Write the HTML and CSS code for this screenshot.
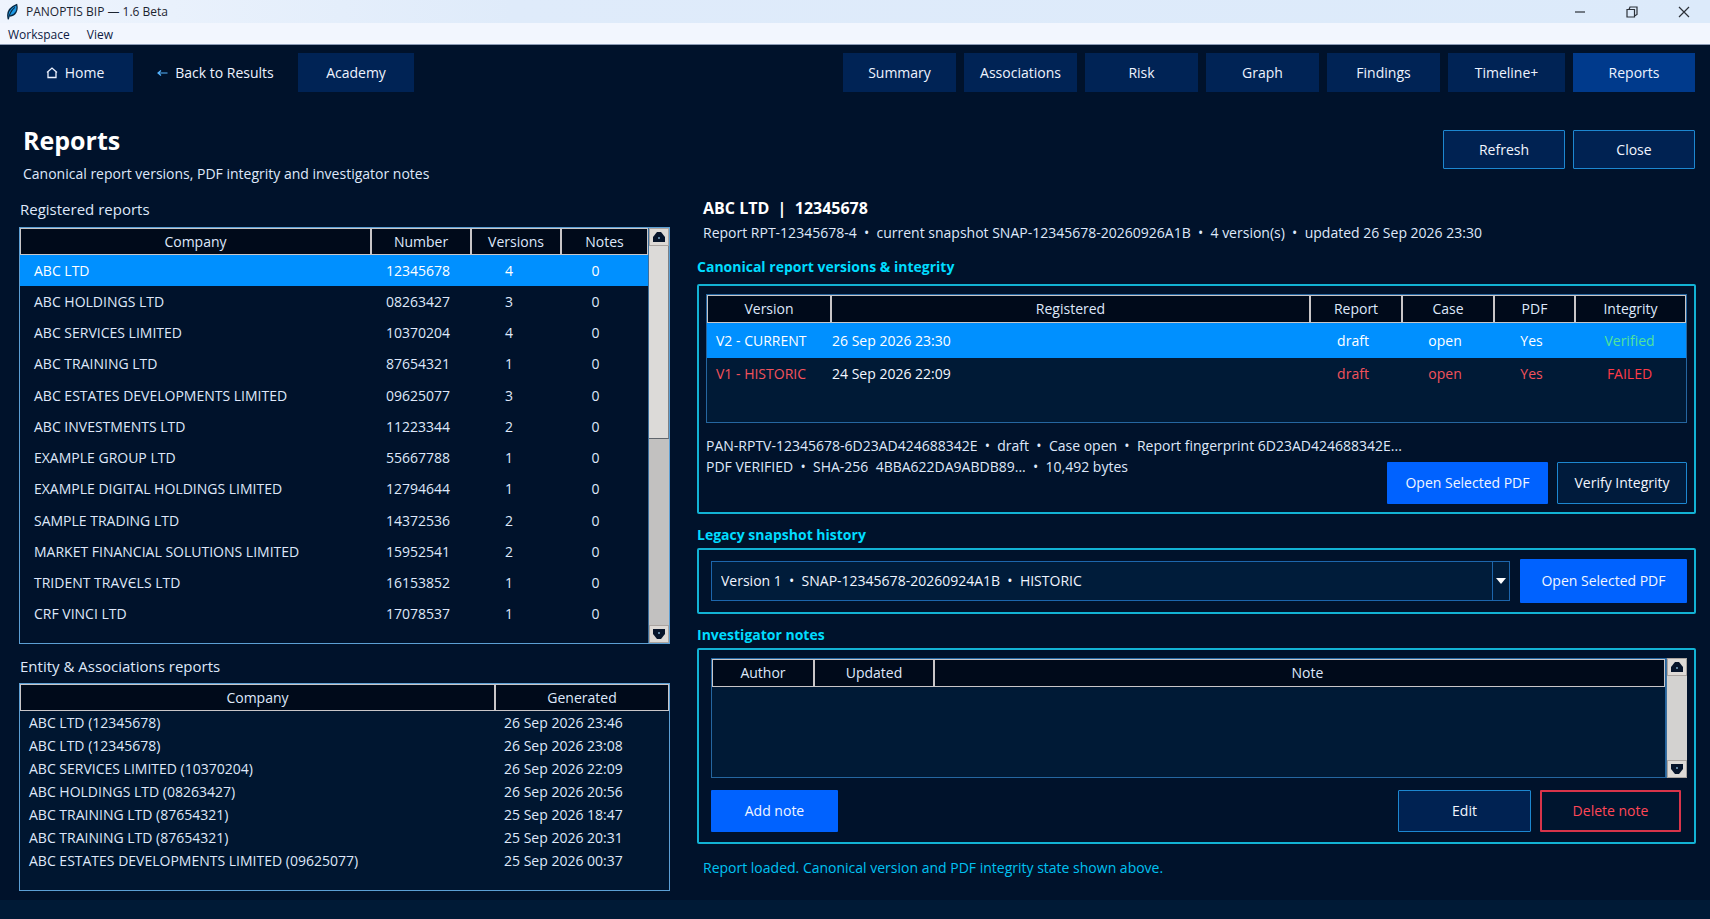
FILE: index.html
```html
<!DOCTYPE html>
<html lang="en">
<head>
<meta charset="utf-8">
<title>PANOPTIS BIP — 1.6 Beta</title>
<link rel="stylesheet" href="styles.css">
</head>
<body>
<div class="app">
  <header class="titlebar">
    <svg class="app-icon" viewBox="0 0 14 18" aria-hidden="true"><path d="M2.5 16.5C1 11 1.500 5 11.500 1C13 7 10.500 12.500 4 13.500" fill="#1f9be6" stroke="#0a2a44" stroke-width="1.400"/><path d="M2.500 17C3.500 11 6 7 9.500 4" fill="none" stroke="#0a2a44" stroke-width="1.200"/></svg>
    <span class="app-name">PANOPTIS BIP — 1.6 Beta</span>
    <div class="window-controls">
      <button type="button" aria-label="Minimize"><svg viewBox="0 0 12 12"><path d="M1 6H11"/></svg></button>
      <button type="button" aria-label="Restore"><svg viewBox="0 0 12 12"><path d="M1 3.500H8.500V11H1ZM3 3.500L4 1H11V8.500L8.500 10"/></svg></button>
      <button type="button" aria-label="Close window"><svg viewBox="0 0 12 12"><path d="M1 1L11 11M11 1L1 11"/></svg></button>
    </div>
  </header>
  <nav class="menubar" aria-label="Menu">
    <button type="button">Workspace</button>
    <button type="button">View</button>
  </nav>

  <div class="toolbar">
    <button type="button" class="tab wide"><svg class="home" viewBox="0 0 12 12" aria-hidden="true"><path d="M1 5.500L6 1L11 5.500M2 5V10.500H10V5"/></svg>Home</button>
    <button type="button" class="tab back"><svg class="arrow" viewBox="0 0 11 8" aria-hidden="true"><path d="M10.500 4H1M4 1.500L1 4L4 6.500"/></svg>Back to Results</button>
    <button type="button" class="tab wide">Academy</button>
    <nav class="tabs" aria-label="Sections">
      <button type="button" class="tab">Summary</button>
      <button type="button" class="tab">Associations</button>
      <button type="button" class="tab">Risk</button>
      <button type="button" class="tab">Graph</button>
      <button type="button" class="tab">Findings</button>
      <button type="button" class="tab tab-md">Timeline+</button>
      <button type="button" class="tab tab-lg active">Reports</button>
    </nav>
  </div>

  <div class="page-head">
    <div>
      <h1>Reports</h1>
      <p>Canonical report versions, PDF integrity and investigator notes</p>
    </div>
    <div class="head-actions">
      <button type="button" class="btn outline">Refresh</button>
      <button type="button" class="btn outline">Close</button>
    </div>
  </div>

  <main class="columns">
    <section class="left">
      <h2 class="label">Registered reports</h2>
      <div class="frame registered">
        <table class="grid reports">
          <colgroup><col class="c-company"><col class="c-number"><col class="c-versions"><col class="c-notes"></colgroup>
          <thead><tr><th>Company</th><th>Number</th><th>Versions</th><th>Notes</th></tr></thead>
          <tbody>
            <tr class="selected"><td>ABC LTD</td><td>12345678</td><td>4</td><td>0</td></tr>
            <tr><td>ABC HOLDINGS LTD</td><td>08263427</td><td>3</td><td>0</td></tr>
            <tr><td>ABC SERVICES LIMITED</td><td>10370204</td><td>4</td><td>0</td></tr>
            <tr><td>ABC TRAINING LTD</td><td>87654321</td><td>1</td><td>0</td></tr>
            <tr><td>ABC ESTATES DEVELOPMENTS LIMITED</td><td>09625077</td><td>3</td><td>0</td></tr>
            <tr><td>ABC INVESTMENTS LTD</td><td>11223344</td><td>2</td><td>0</td></tr>
            <tr><td>EXAMPLE GROUP LTD</td><td>55667788</td><td>1</td><td>0</td></tr>
            <tr><td>EXAMPLE DIGITAL HOLDINGS LIMITED</td><td>12794644</td><td>1</td><td>0</td></tr>
            <tr><td>SAMPLE TRADING LTD</td><td>14372536</td><td>2</td><td>0</td></tr>
            <tr><td>MARKET FINANCIAL SOLUTIONS LIMITED</td><td>15952541</td><td>2</td><td>0</td></tr>
            <tr><td>TRIDENT TRAVЄLS LTD</td><td>16153852</td><td>1</td><td>0</td></tr>
            <tr><td>CRF VINCI LTD</td><td>17078537</td><td>1</td><td>0</td></tr>
          </tbody>
        </table>
        <div class="scrollbar">
          <button type="button" aria-label="Scroll up"><svg viewBox="0 0 14 12"><path d="M1 11V6L5 1H9L13 6V11Z"/><circle cx="7" cy="7" r="1"/></svg></button>
          <div class="trough"><div class="thumb"></div></div>
          <button type="button" aria-label="Scroll down"><svg viewBox="0 0 14 12"><path d="M1 1V6L5 11H9L13 6V1Z"/><circle cx="7" cy="5" r="1"/></svg></button>
        </div>
      </div>

      <h2 class="label second">Entity &amp; Associations reports</h2>
      <div class="frame entity">
        <table class="grid entities">
          <colgroup><col class="c-entity"><col></colgroup>
          <thead><tr><th>Company</th><th>Generated</th></tr></thead>
          <tbody>
            <tr><td>ABC LTD (12345678)</td><td>26 Sep 2026 23:46</td></tr>
            <tr><td>ABC LTD (12345678)</td><td>26 Sep 2026 23:08</td></tr>
            <tr><td>ABC SERVICES LIMITED (10370204)</td><td>26 Sep 2026 22:09</td></tr>
            <tr><td>ABC HOLDINGS LTD (08263427)</td><td>26 Sep 2026 20:56</td></tr>
            <tr><td>ABC TRAINING LTD (87654321)</td><td>25 Sep 2026 18:47</td></tr>
            <tr><td>ABC TRAINING LTD (87654321)</td><td>25 Sep 2026 20:31</td></tr>
            <tr><td>ABC ESTATES DEVELOPMENTS LIMITED (09625077)</td><td>25 Sep 2026 00:37</td></tr>
          </tbody>
        </table>
      </div>
    </section>

    <section class="right">
      <div class="summary">
        <h2>ABC LTD  |  12345678</h2>
        <p>Report RPT-12345678-4  •  current snapshot SNAP-12345678-20260926A1B  •  4 version(s)  •  updated 26 Sep 2026 23:30</p>
      </div>

      <h3>Canonical report versions &amp; integrity</h3>
      <div class="panel canonical">
        <div class="inner versions-frame">
          <table class="grid versions">
            <colgroup><col class="v-version"><col><col class="v-report"><col class="v-case"><col class="v-pdf"><col class="v-integrity"></colgroup>
            <thead><tr><th>Version</th><th>Registered</th><th>Report</th><th>Case</th><th>PDF</th><th>Integrity</th></tr></thead>
            <tbody>
              <tr class="selected"><td>V2 - CURRENT</td><td>26 Sep 2026 23:30</td><td>draft</td><td>open</td><td>Yes</td><td class="ok">Verified</td></tr>
              <tr class="historic"><td>V1 - HISTORIC</td><td class="plain">24 Sep 2026 22:09</td><td>draft</td><td>open</td><td>Yes</td><td class="bad">FAILED</td></tr>
            </tbody>
          </table>
        </div>
        <div class="detail">
          <p>PAN-RPTV-12345678-6D23AD424688342E  •  draft  •  Case open  •  Report fingerprint 6D23AD424688342E...
PDF VERIFIED  •  SHA-256  4BBA622DA9ABDB89...  •  10,492 bytes</p>
          <div class="detail-actions">
            <button type="button" class="btn primary open">Open Selected PDF</button>
            <button type="button" class="btn outline dim">Verify Integrity</button>
          </div>
        </div>
      </div>

      <h3>Legacy snapshot history</h3>
      <div class="panel legacy">
        <div class="combo">
          <select aria-label="Legacy snapshot"><option>Version 1 &nbsp;• &nbsp;SNAP-12345678-20260924A1B &nbsp;• &nbsp;HISTORIC</option></select>
          <span class="drop"><svg viewBox="0 0 10 6" aria-hidden="true"><path d="M0 0H10L5 6Z"/></svg></span>
        </div>
        <button type="button" class="btn primary">Open Selected PDF</button>
      </div>

      <h3>Investigator notes</h3>
      <div class="panel notes">
        <div class="notes-view">
          <div class="inner notes-frame">
            <table class="grid notes-table">
              <colgroup><col class="n-author"><col class="n-updated"><col></colgroup>
              <thead><tr><th>Author</th><th>Updated</th><th>Note</th></tr></thead>
            </table>
          </div>
          <div class="scrollbar">
            <button type="button" aria-label="Scroll notes up"><svg viewBox="0 0 14 12"><path d="M1 11V6L5 1H9L13 6V11Z"/><circle cx="7" cy="7" r="1"/></svg></button>
            <div class="trough"><div class="thumb full"></div></div>
            <button type="button" aria-label="Scroll notes down"><svg viewBox="0 0 14 12"><path d="M1 1V6L5 11H9L13 6V1Z"/><circle cx="7" cy="5" r="1"/></svg></button>
          </div>
        </div>
        <div class="notes-actions">
          <button type="button" class="btn primary add">Add note</button>
          <button type="button" class="btn outline edit">Edit</button>
          <button type="button" class="btn danger">Delete note</button>
        </div>
      </div>
      <p class="status" role="status">Report loaded. Canonical version and PDF integrity state shown above.</p>
    </section>
  </main>
  <footer class="bottom"></footer>
</div>
</body>
</html>
```

FILE: styles.css
```css
* { box-sizing: border-box; }
body { margin: 0; background: #00122b; color: #dfe8fa; font: 14px/20px "Open Sans", "Noto Sans", sans-serif; }
h1, h2, h3, p { margin: 0; font-weight: 400; }
button, select { font: inherit; color: inherit; border: 0; padding: 0; margin: 0; background: none; border-radius: 0; }
svg { display: block; }
.app { min-height: 100vh; display: flex; flex-direction: column; }

.titlebar { height: 23px; display: flex; align-items: center; background: linear-gradient(90deg, #eef4fd, #dfebfa 30%, #dceafa); color: #1c2430; font-size: 12px; padding-left: 6px; }
.app-icon { width: 13px; height: 18px; margin-right: 7px; }
.window-controls { margin-left: auto; display: flex; height: 100%; }
.window-controls button { width: 52px; display: flex; align-items: center; justify-content: center; }
.window-controls svg { width: 12px; height: 12px; fill: none; stroke: #2b3038; stroke-width: 1.2; }
.menubar { height: 22px; display: flex; gap: 17px; padding: 2px 0 0 8px; background: #f2f6fe; border-bottom: 1px solid #8c9bb5; color: #0e1a44; font-size: 12px; }

.toolbar { display: flex; padding: 8px 15px 0 17px; }
.tab { width: 113px; height: 39px; background: #002355; color: #eef3ff; display: flex; align-items: center; justify-content: center; }
.tab.wide { width: 116px; }
.tab.tab-md { width: 117px; }
.tab.tab-lg { width: 122px; }
.tab.active { background: #003a8c; }
.tab.back { width: 165px; background: none; }
.home { width: 12px; height: 12px; margin-right: 7px; fill: none; stroke: #eef3ff; stroke-width: 1.3; }
.arrow { width: 11px; height: 8px; margin-right: 7px; fill: none; stroke: #55b4ff; stroke-width: 1.2; }
.tabs { margin-left: auto; display: flex; gap: 8px; }

.page-head { display: flex; justify-content: space-between; padding: 30px 15px 0 23px; height: 98px; }
.page-head h1 { font-size: 25px; line-height: 36px; font-weight: 700; color: #fff; }
.page-head p { margin-top: 6px; }
.head-actions { display: flex; gap: 8px; padding-top: 8px; }
.head-actions .btn { width: 122px; height: 39px; }

.btn { color: #f2f6ff; height: 42px; border-radius: 1px; }
.outline { background: #002252; border: 1px solid #1d87d0; }
.outline.dim { background: #001b3c; width: 130px; }
.primary { background: #0062ff; }
.danger { width: 141px; border: 2px solid #d8344a; background: #00152f; color: #ff4757; }

.columns { flex: 1; display: grid; grid-template-columns: minmax(0, 651fr) minmax(0, 999fr); gap: 27px; padding: 0 14px 9px 19px; }
.left { display: flex; flex-direction: column; padding-top: 7px; }
.label { font-size: 15px; line-height: 24px; padding-left: 1px; margin-bottom: 6px; }
.label.second { margin: 10px 0 5px; }
.frame { border: 1px solid #5c9fd4; display: flex; }
.registered { height: 417px; }
.entity { flex: 1; background: #001630; align-items: flex-start; }

.grid { border-collapse: separate; border-spacing: 0; table-layout: fixed; width: 100%; flex: 1; min-width: 0; }
.grid th { height: 27px; padding: 0; font-weight: 400; background: #000a1a; border: 1px solid #c9c6c8; line-height: 20px; }
.grid td { padding: 0; white-space: nowrap; }
.grid .selected td { background: #0090ff; color: #fff; }
.reports { height: 402px; }
.reports td { text-align: center; padding-right: 14px; }
.reports td:nth-child(1) { text-align: left; padding: 0 0 0 14px; }
.reports td:nth-child(2) { padding-right: 6px; }
.reports td:nth-child(4) { padding-right: 18px; }
.c-company { width: 351px; }
.c-number { width: 100px; }
.c-versions { width: 90px; }
.entities td { height: 23px; padding-left: 9px; }
.c-entity { width: 475px; }

.scrollbar { width: 21px; flex: none; display: flex; flex-direction: column; background: #d9d6d2; border-left: 1px solid #3d6f9c; }
.scrollbar button { height: 18px; background: #dedad6; display: flex; align-items: center; justify-content: center; border: 1px solid #aaa4a0; }
.scrollbar svg { width: 14px; height: 12px; }
.scrollbar path { fill: #06142a; }
.scrollbar circle { fill: #7fa8c8; }
.trough { flex: 1; background: #c2c1c0; }
.thumb { height: 51%; background: #dcdad8; border-bottom: 1px solid #60656c; border-right: 1px solid #7c8086; }
.thumb.full { height: 100%; border: 0; background: #d3d2d0; }

.right { display: flex; flex-direction: column; padding-top: 6px; }
.summary { padding-left: 6px; margin-bottom: 3px; }
.summary h2 { font-size: 16px; line-height: 24px; font-weight: 700; color: #fff; white-space: pre; }
.summary p { margin-top: 3px; white-space: pre; }
h3 { margin-top: 11px; font-size: 14px; line-height: 20px; font-weight: 700; color: #00dcff; }
.panel { border: 2px solid #12b2d4; border-radius: 2px; }
.inner { border: 1px solid #2566a0; background: #001a36; }
.canonical { margin-top: 7px; height: 230px; padding: 8px 7px 8px 7px; display: flex; flex-direction: column; }
.versions-frame { height: 129px; }
.versions th { height: 28px; }
.versions td { height: 32px; text-align: center; padding-right: 6px; }
.versions .selected td { height: 35px; }
.versions td:nth-child(1) { text-align: left; padding-left: 9px; }
.versions td:nth-child(2) { text-align: left; padding-left: 1px; }
.versions td:nth-child(6) { padding-right: 2px; }
.v-version { width: 124px; }
.v-report { width: 92px; }
.v-case { width: 92px; }
.v-pdf { width: 81px; }
.v-integrity { width: 111px; }
.historic { color: #f2525c; }
.historic .plain { color: #f4f7ff; }
.versions .selected .ok { color: #52e39a; }
.bad { color: #ff3b48; }
.detail { flex: 1; display: grid; padding-top: 12px; }
.detail p { grid-area: 1 / 1; white-space: pre; line-height: 21px; }
.detail-actions { grid-area: 1 / 1; align-self: end; display: flex; justify-content: flex-end; gap: 9px; }
.open { width: 161px; }

.legacy { margin-top: 3px; height: 66px; padding: 9px 7px 9px 12px; display: flex; gap: 10px; align-items: center; }
.combo { flex: 1; display: flex; height: 40px; border: 1px solid #1d66ac; background: #001c3a; position: relative; }
.combo select { flex: 1; appearance: none; padding-left: 9px; color: #f0f5ff; }
.drop { position: absolute; right: 0; top: 0; bottom: 0; width: 17px; border-left: 1px solid #1d66ac; display: flex; align-items: center; justify-content: center; pointer-events: none; }
.drop svg { width: 10px; height: 6px; fill: #fff; }
.legacy .btn { width: 167px; height: 44px; }

.notes { margin-top: 3px; height: 196px; padding: 8px 7px 10px 12px; display: flex; flex-direction: column; gap: 12px; }
.notes-view { flex: 1; display: flex; }
.notes-frame { flex: 1; display: flex; align-items: flex-start; }
.notes-table th { height: 28px; }
.notes-table th:nth-child(3) { padding-left: 16px; }
.n-author { width: 102px; }
.n-updated { width: 120px; }
.notes-actions { display: flex; gap: 9px; padding-right: 6px; }
.add { width: 127px; margin-right: auto; }
.edit { width: 133px; }
.status { padding: 14px 0 0 6px; color: #00c2f2; }
.bottom { height: 19px; background: #001a36; }
```
